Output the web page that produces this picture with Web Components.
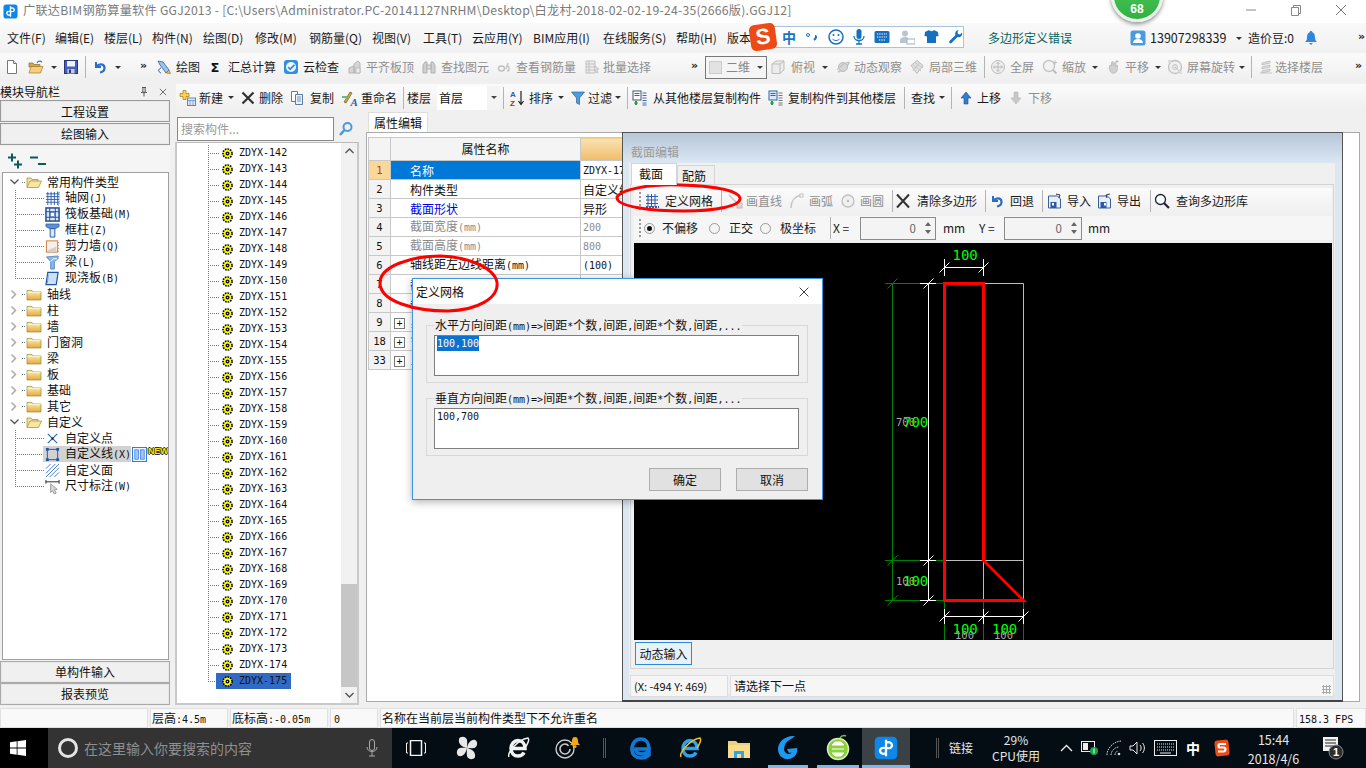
<!DOCTYPE html>
<html lang="zh-CN">
<head>
<meta charset="utf-8">
<title>GGJ2013</title>
<style>
  html, body { margin: 0; height: 100%; overflow: hidden; background: #f0f0f0; }
  body { font: 12px/16px "Noto Sans CJK SC", "Liberation Sans", sans-serif; color: #111; }
  gld-app { width: 1366px; height: 768px; }
</style>
</head>
<body>

<gld-app>
  <title-bar></title-bar>

  <tool-bar slot="menu" kind="menu">
    <tool-cell w="48">文件(F)</tool-cell>
    <tool-cell w="49">编辑(E)</tool-cell>
    <tool-cell w="48">楼层(L)</tool-cell>
    <tool-cell w="51">构件(N)</tool-cell>
    <tool-cell w="52">绘图(D)</tool-cell>
    <tool-cell w="54">修改(M)</tool-cell>
    <tool-cell w="63">钢筋量(Q)</tool-cell>
    <tool-cell w="51">视图(V)</tool-cell>
    <tool-cell w="49">工具(T)</tool-cell>
    <tool-cell w="61">云应用(Y)</tool-cell>
    <tool-cell w="70">BIM应用(I)</tool-cell>
    <tool-cell w="73">在线服务(S)</tool-cell>
    <tool-cell w="51">帮助(H)</tool-cell>
    <tool-cell w="23">版本</tool-cell>
    <ime-bar></ime-bar>
    <tool-cell w="34"></tool-cell>
    <tool-cell w="142"><span style="color:#006464">多边形定义错误</span></tool-cell>
    <tool-cell w="20" icon="user" g="0"></tool-cell>
    <tool-cell w="86"><span style="font-size:12.5px">13907298339</span></tool-cell>
    <tool-caret w="12" p="0"></tool-caret>
    <tool-cell w="55">造价豆:0</tool-cell>
    <tool-cell w="55" icon="bell"></tool-cell>
    <tool-cell w="8" icon="more"></tool-cell>
  </tool-bar>

  <tool-bar slot="bar">
    <tool-cell w="22" icon="doc"></tool-cell>
    <tool-cell w="22" p="2" icon="open"></tool-cell>
    <tool-caret w="12" p="3"></tool-caret>
    <tool-cell w="25" p="3" icon="save"></tool-cell>
    <tool-sep w="1" p="0"></tool-sep>
    <tool-cell w="24" p="6" icon="undo"></tool-cell>
    <tool-caret w="14" p="5"></tool-caret>
    <tool-cell w="29" p="16" icon="more"></tool-cell>
    <tool-cell w="54" p="3" g="4" icon="draw">绘图</tool-cell>
    <tool-cell w="76" g="5" icon="sigma">汇总计算</tool-cell>
    <tool-cell w="64" g="4" icon="cloud">云检查</tool-cell>
    <tool-cell w="74" g="3" icon="level" dim>平齐板顶</tool-cell>
    <tool-cell w="76" g="4" icon="binoc" dim>查找图元</tool-cell>
    <tool-cell w="87" g="3" icon="rebar" dim>查看钢筋量</tool-cell>
    <tool-cell w="105" g="3" icon="batch" dim>批量选择</tool-cell>
    <tool-cell w="16" p="2" icon="more"></tool-cell>
    <combo-box w="62" swatch>二维</combo-box>
    <tool-cell w="54" p="3" g="5" icon="cube" dim>俯视</tool-cell>
    <tool-caret w="14" p="1"></tool-caret>
    <tool-cell w="74" g="3" icon="orbit" dim>动态观察</tool-cell>
    <tool-cell w="75" g="4" icon="local3d" dim>局部三维</tool-cell>
    <tool-sep w="1" p="0"></tool-sep>
    <tool-cell w="55" p="5" g="4" icon="fit" dim>全屏</tool-cell>
    <tool-cell w="50" p="2" g="4" icon="zoom" dim>缩放</tool-cell>
    <tool-caret w="15" p="2"></tool-caret>
    <tool-cell w="48" g="4" icon="pan" dim>平移</tool-cell>
    <tool-caret w="14" p="2"></tool-caret>
    <tool-cell w="72" g="4" icon="rotate" dim>屏幕旋转</tool-cell>
    <tool-caret w="12" p="0"></tool-caret>
    <tool-sep w="1" p="0"></tool-sep>
    <tool-cell w="100" p="6" g="1" icon="floors" dim>选择楼层</tool-cell>
    <tool-cell w="10" p="3" icon="more"></tool-cell>
  </tool-bar>

  <nav-panel slot="nav"></nav-panel>

  <tool-bar slot="bar2" kind="sub">
    <tool-cell w="51" p="4" g="3" icon="add">新建</tool-cell>
    <tool-caret w="11" p="1"></tool-caret>
    <tool-cell w="48" p="2" g="3" icon="del">删除</tool-cell>
    <tool-cell w="54" p="3" g="5" icon="copy">复制</tool-cell>
    <tool-cell w="62" p="1" g="4" icon="rename">重命名</tool-cell>
    <tool-sep w="3" p="1"></tool-sep>
    <tool-cell w="32" p="2">楼层</tool-cell>
    <combo-box w="63" flat>首层</combo-box>
    <tool-sep w="5" p="3"></tool-sep>
    <tool-cell w="53" p="5" g="3" icon="sort">排序</tool-cell>
    <tool-caret w="12" p="0"></tool-caret>
    <tool-cell w="45" g="2" icon="filter">过滤</tool-cell>
    <tool-caret w="11" p="0"></tool-caret>
    <tool-sep w="3" p="1"></tool-sep>
    <tool-cell w="137" p="3" g="5" icon="copyfrom">从其他楼层复制构件</tool-cell>
    <tool-cell w="134" p="2" g="4" icon="copyto">复制构件到其他楼层</tool-cell>
    <tool-sep w="8" p="4"></tool-sep>
    <tool-cell w="31" p="3">查找</tool-cell>
    <tool-caret w="10" p="0"></tool-caret>
    <tool-sep w="6" p="2"></tool-sep>
    <tool-cell w="48" p="3" g="3" icon="up">上移</tool-cell>
    <tool-cell w="60" p="5" g="4" icon="down" dim>下移</tool-cell>
  </tool-bar>

  <parts-panel slot="parts"></parts-panel>
  <props-panel slot="props"></props-panel>

  <status-bar slot="status"></status-bar>
  <task-bar slot="task"></task-bar>

  <section-window slot="float"></section-window>
  <grid-dialog slot="float"></grid-dialog>
  <hand-marks slot="float"></hand-marks>
</gld-app>

<script>
// shared icon set, all drawn on a 16x16 box
const folderClosed = `<path d="M1 4.5h5l1.2 1.5H15v8H1z" fill="url(#fg)" stroke="#a8842c" stroke-width=".7"/><path d="M1.5 6.5h13" stroke="#fff3c4"/>`;
const ICONS = {
  gradients: `<defs><linearGradient id="fg" x1="0" y1="0" x2="0" y2="1"><stop offset="0" stop-color="#fff2b8"/><stop offset="1" stop-color="#e0a93c"/></linearGradient></defs>`,
  app: `<rect x=".5" y=".5" width="15" height="15" rx="3" fill="#0d87e9"/><path d="M8 2.5v11M8 4.6c2.4-1.2 4.6.4 3.8 2.5-.4 1-1.8 1.2-3.8 1M8 11.4C5.6 12.6 3.4 11 4.2 8.9c.4-1 1.8-1.2 3.8-.8" fill="none" stroke="#fff" stroke-width="1.5"/>`,
  doc: `<path d="M3.5 1.5h6l3 3v10h-9z" fill="#fff" stroke="#777"/><path d="M9.5 1.5v3h3" fill="#e8e8e8" stroke="#777"/>`,
  open: `<path d="M1 4h4l1 1.5h6V8H1z" fill="#d9a544" stroke="#8c6a28" stroke-width=".7"/><path d="M1 14l2-6.5h12L12.5 14z" fill="#f5cf78" stroke="#a07a30" stroke-width=".7"/><path d="M9 4c1-2 3-2.500 5-1" fill="none" stroke="#3a7ac0" stroke-width="1.200"/>`,
  save: `<rect x="1.500" y="1.500" width="13" height="13" fill="#4660b8" stroke="#26357c"/><rect x="4" y="2" width="8" height="5.500" fill="#eef2fb"/><rect x="4.500" y="10" width="7" height="4.500" fill="#c6cde0"/><rect x="6" y="10.500" width="2" height="3.500" fill="#26357c"/>`,
  undo: `<path d="M4 3v5h5" fill="none" stroke="#2b6cc4" stroke-width="2"/><path d="M4.500 7.500C7 4.500 12.500 4.500 12.500 9c0 2.500-2 4-4.500 4.500" fill="none" stroke="#2b6cc4" stroke-width="2.200"/>`,
  draw: `<path d="M2 2l5 1 6 8-3 3-6-8z" fill="#9cc3ea" stroke="#345f96" stroke-width=".8"/><path d="M10 14l3-3 1.500 3.500z" fill="#e9c45a" stroke="#7a5f20" stroke-width=".6"/><path d="M5 9c-3 1-3 4 0 5" fill="none" stroke="#345f96"/>`,
  sigma: `<text x="8" y="13" text-anchor="middle" font-family="DejaVu Sans" font-weight="700" font-size="13" fill="#111">Σ</text>`,
  cloud: `<rect x="1" y="1" width="14" height="14" rx="3" fill="#2f8fe0"/><circle cx="8" cy="8" r="5" fill="#f2f7fc"/><path d="M5 8l2.200 2.200L11.500 5.800" fill="none" stroke="#2f8fe0" stroke-width="1.700"/>`,
  level: `<path d="M2 14V9l5-2v7zM7 14V5l4-3 2 2v10z" fill="#d6d6d6" stroke="#b4b4b4"/><path d="M9 9h4v5H9z" fill="#eee" stroke="#bbb"/>`,
  binoc: `<path d="M2 14V6l2-3h2v11zM10 14V3h2l2 3v8z" fill="#cfcfcf" stroke="#b0b0b0"/><rect x="6" y="6" width="4" height="4" fill="#ddd" stroke="#b0b0b0"/>`,
  rebar: `<ellipse cx="4.500" cy="9.500" rx="3" ry="2.500" fill="none" stroke="#c2c2c2" stroke-width="1.400"/><path d="M10 7c3 0 3 5 0 5M11 4l-2 6" fill="none" stroke="#c2c2c2" stroke-width="1.400"/>`,
  batch: `<path d="M2 2h9v12H2zM2 5h9M2 8h9M2 11h9M5 2v12" fill="#eee" stroke="#c0c0c0"/><path d="M11 7l4 3-2 .5 1 3-1.500.5-1-3-1 1z" fill="#ddd" stroke="#b8b8b8" stroke-width=".6"/>`,
  more: `<text x="0" y="10" font-family="DejaVu Sans" font-weight="700" font-size="11" fill="#222">»</text>`,
  cube: `<path d="M2 5l4-3h8v9l-4 3.500H2z" fill="#ececec" stroke="#bdbdbd"/><path d="M2 5h8v9.500M10 5l4-3" fill="none" stroke="#bdbdbd"/>`,
  orbit: `<path d="M3 13C6 12 14 6 14 3" fill="none" stroke="#c8c8c8" stroke-width="2"/><circle cx="8" cy="8" r="4.500" fill="#d6d6d6" stroke="#bbb"/><path d="M2 11c3-4 7-7 12-8" fill="none" stroke="#bdbdbd"/>`,
  local3d: `<path d="M8 1.500l6 5-6 8-6-8z" fill="#e2e2e2" stroke="#bdbdbd"/><path d="M3 5l9 7M5 3l9 6M11 3l-7 9" stroke="#c6c6c6" fill="none"/>`,
  fit: `<circle cx="8" cy="8" r="6.500" fill="#eee" stroke="#bcbcbc"/><path d="M8 3.500v9M3.500 8h9M8 3.500l-1.500 1.500M8 3.500l1.500 1.500M8 12.500l-1.500-1.500M8 12.500l1.500-1.500M3.500 8L5 6.500M3.500 8L5 9.500M12.500 8L11 6.500M12.500 8L11 9.500" stroke="#b8b8b8" fill="none"/>`,
  zoom: `<circle cx="7" cy="7" r="5.500" fill="#f2f2f2" stroke="#c4c4c4" stroke-width="1.400"/><path d="M11 11l3.500 3.500" stroke="#bdbdbd" stroke-width="2"/><path d="M13 1.500v4M11 3.500h4" stroke="#bdbdbd"/>`,
  pan: `<path d="M4 9l1-3 1.500 1V3l1.500-.5.500 4 1-3 1.500.5-.5 4 1-2 1.200.8L12 12c-1 2.500-5 3-6.500 1z" fill="#d0d0d0" stroke="#b4b4b4" stroke-width=".7"/><path d="M12 1v3M10.500 2.500h3" stroke="#bbb"/>`,
  rotate: `<circle cx="8" cy="8" r="6.500" fill="#f0f0f0" stroke="#c0c0c0" stroke-width="1.300"/><circle cx="8" cy="8" r="2.500" fill="#e4e4e4" stroke="#c8c8c8"/><path d="M8 8l4 4" stroke="#c0c0c0"/><rect x="1" y="1" width="3" height="3" fill="#ddd"/><rect x="12" y="12" width="3" height="3" fill="#ddd"/>`,
  floors: `<path d="M4 4l8-2v2l-8 2zM4 8l8-2v2l-8 2zM4 12l8-2v2l-8 2zM2 14h12" fill="#ddd" stroke="#bdbdbd" stroke-width=".8"/>`,
  add: `<path d="M3 0.500h3v3h3v3H6v3H3v-3H0v-3h3z" fill="#ffd34d" stroke="#9c7c10" stroke-width=".7"/><rect x="7.500" y="8" width="8" height="7.500" fill="#dfe9f6" stroke="#5f86b8"/><path d="M7.500 10.500h8M10 10.500v5M13 10.500v5" stroke="#5f86b8" stroke-width=".7"/>`,
  del: `<path d="M2.500 2.500l11 11M13.500 2.500l-11 11" stroke="#333" stroke-width="2.200"/>`,
  copy: `<path d="M2.500 1.500h6v10h-6z" fill="#fff" stroke="#5a7ca8"/><path d="M6.500 4.500h7v10h-7z" fill="#eaf1fa" stroke="#5a7ca8"/><path d="M8 7h4M8 9h4M8 11h4" stroke="#5a7ca8" stroke-width=".8"/>`,
  rename: `<path d="M3 12l6-10 2 1-6 10z" fill="#c9a94a" stroke="#6e5a1c" stroke-width=".7"/><path d="M1 7h5" stroke="#6b8" stroke-width="2"/><text x="9.500" y="15.500" font-family="Liberation Serif" font-weight="700" font-style="italic" font-size="11" fill="#2b5fa8">A</text>`,
  sort: `<text x="0" y="7" font-family="Liberation Sans" font-weight="700" font-size="8" fill="#2b5fa8">A</text><text x="0" y="15.500" font-family="Liberation Sans" font-weight="700" font-size="8" fill="#a82b2b">Z</text><path d="M11 1v13M8.500 11l2.500 3.500 2.500-3.500" stroke="#222" fill="none" stroke-width="1.200"/>`,
  filter: `<path d="M1.500 2h13L9.500 8v6.500l-3-1.500V8z" fill="#4e9be0" stroke="#2b66a6" stroke-width=".7"/>`,
  copyfrom: `<rect x="1" y="1" width="8" height="9" fill="#fff" stroke="#456"/><path d="M2.500 3.500h5M2.500 5.500h5" stroke="#2b66a6"/><path d="M4 11v4M2.500 13h3" stroke="#2a9d3a" stroke-width="2"/><path d="M10.500 3h4M10.500 5.500h4M10.500 8h4M10.500 10.500h4M10.500 13h4M10.500 15h4" stroke="#3b6ea8"/>`,
  copyto: `<rect x="1" y="1" width="8" height="9" fill="#dbe8fb" stroke="#2b66a6"/><path d="M2.500 3.500h5M2.500 5.500h5" stroke="#2b66a6"/><path d="M4 11v4M2.500 13h3" stroke="#2a9d3a" stroke-width="2"/><path d="M10.500 3h4M10.500 5.500h4M10.500 8h4M10.500 10.500h4M10.500 13h4M10.500 15h4" stroke="#777"/>`,
  up: `<path d="M8 2l5 6H10v6H6V8H3z" fill="#2e7fd0" stroke="#1a4f92" stroke-width=".6"/>`,
  down: `<path d="M6 2h4v6h3l-5 6-5-6h3z" fill="#c8c8c8" stroke="#b4b4b4" stroke-width=".6"/>`,
  user: `<rect x=".5" y=".5" width="15" height="15" rx="2.500" fill="#4a9adf"/><circle cx="8" cy="6" r="2.800" fill="#fff"/><path d="M3 13c.5-3 2-4 5-4s4.500 1 5 4z" fill="#fff"/>`,
  bell: `<path d="M8 1c1 0 1.300.7 1.300 1.300C11.500 3 12 5 12 8c0 2 1 3 2 4H2c1-1 2-2 2-4 0-3 .5-5 2.700-5.700C6.700 1.700 7 1 8 1z" fill="#2e86de"/><path d="M6 13h4l-2 2z" fill="#2e86de"/>`,
  gear: `<circle cx="8" cy="8" r="5.600" fill="#ff0" stroke="#000" stroke-width="2" stroke-dasharray="2 1.200"/><circle cx="8" cy="8" r="3.400" fill="#ff0"/><circle cx="8" cy="8" r="2.400" fill="#000"/><circle cx="8" cy="8" r=".9" fill="#ff0"/>`,
  folder: folderClosed,
  folderopen: `<path d="M1 13V4h4l1 1.500h6V7" fill="#f2e2a8" stroke="#a8842c" stroke-width=".7"/><path d="M1 13.500L4 7h11.500l-3 6.500z" fill="#fbe6a0" stroke="#a8842c" stroke-width=".7"/>`,
  gridnet: `<path d="M1 3h14M1 6h14M1 9h14M1 12h14M3 1v14M6.500 1v14M10 1v14M13.500 1v14" stroke="#2b5fb0" fill="none"/><path d="M13 1h2v14h-2" fill="none" stroke="#2b5fb0" stroke-dasharray="1 1"/>`,
  raft: `<rect x="1" y="1" width="14" height="14" fill="#dbe6f6" stroke="#1f4f9c" stroke-width="1.600"/><path d="M1 5h14M1 11h14M5 1v14M11 1v14" stroke="#1f4f9c"/><rect x="6" y="6" width="4" height="4" fill="#fff" stroke="#1f4f9c" stroke-width=".6"/>`,
  column: `<path d="M1 1h14v3l-4 2H5L1 4z" fill="#5d8fd6" stroke="#23559c" stroke-width=".7"/><path d="M5.500 6h5v9h-5z" fill="#dbe8fa" stroke="#23559c"/>`,
  wall: `<rect x="1.500" y="2" width="12" height="12" fill="#f7f0ea" stroke="#cc7a3c"/><path d="M3 12l9-4v5H3z" fill="#c8c8c8" opacity=".8"/><path d="M14 4h2M14 7h2M14 10h2M14 13h2" stroke="#cc7a3c" stroke-dasharray="1 1"/>`,
  beam: `<path d="M1.500 2L14 1v3L10 7v8H6V7z" fill="#8ab6e8" stroke="#3f78bf" stroke-width=".8"/><path d="M6 7l3-3h4" fill="none" stroke="#fff"/>`,
  slab: `<path d="M3 1.500h11l-2 13H1z" fill="#cfe0f6" stroke="#1f55a6" stroke-width="1.300"/><path d="M2.500 13l1-9" stroke="#6c9ad8"/>`,
  point: `<path d="M3 3l10 10M13 3L3 13" stroke="#2b6cb8" stroke-width="1.300"/><rect x="7" y="7" width="2" height="2" fill="#111"/>`,
  polyline: `<rect x="2.500" y="2.500" width="11" height="11" fill="none" stroke="#2255a8"/><rect x="1" y="1" width="3" height="3" fill="#2255a8"/><rect x="12" y="1" width="3" height="3" fill="#2255a8"/><rect x="1" y="12" width="3" height="3" fill="#2255a8"/><rect x="12" y="12" width="3" height="3" fill="#2255a8"/>`,
  hatch: `<path d="M1 6l5-5M1 11L11 1M1 15L15 1M5 15L15 5M10 15l5-5" stroke="#3c78d0"/>`,
  dimcur: `<path d="M1 1v4M1 3h14M15 1v4" stroke="#222"/><path d="M6 5l7 6-3 .5 2 3.500-2 1-2-3.500-2 2z" fill="#d6d6d6" stroke="#888" stroke-width=".8"/>`,
  newcol: `<rect x=".5" y=".5" width="15" height="15" fill="#eaf3ff" stroke="#2c74d6"/><rect x="3" y="3" width="4" height="10" fill="#9fc5f5" stroke="#2c74d6" stroke-width=".7"/><rect x="9" y="3" width="4" height="10" fill="#9fc5f5" stroke="#2c74d6" stroke-width=".7"/>`,
  search: `<circle cx="9.500" cy="6" r="4" fill="none" stroke="#4a98dc" stroke-width="2"/><path d="M6.500 9L2 14" stroke="#4a98dc" stroke-width="2.600"/>`,
  plusplus: `<path d="M1 4.500h8M5 .5v8M7 11.500h8M11 7.500v8" stroke="#0a5c5c" stroke-width="2"/>`,
  minusminus: `<path d="M0 4.500h8M8 11h8" stroke="#0a5c5c" stroke-width="2"/>`,
  pin: `<path d="M5.500 2h5M6.500 2v6M9.500 2v6M4 8.500h8M8 8.500V14" stroke="#222" fill="none"/>`,
  close: `<path d="M3 3l10 10M13 3L3 13" stroke="#222" fill="none"/>`,
  gridtool: `<path d="M1 3.500h12M1 7h12M1 10.500h12M3 1v13M6.500 1v13M10 1v13" stroke="#2c5fb0" fill="none"/><path d="M1 14h13" stroke="#2c5fb0" stroke-width="2" stroke-dasharray="2 1"/>`,
  line: `<path d="M2 2l11 11" stroke="#c4c4c4" stroke-width="1.400"/><rect x="10" y="10" width="5" height="5" fill="#d8d8d8" stroke="#bbb"/>`,
  arc: `<path d="M2 15C2 8 6 3 13 2" fill="none" stroke="#c4c4c4" stroke-width="1.400"/><rect x="11" y="1" width="3" height="3" fill="#fff" stroke="#c0c0c0"/>`,
  circle: `<circle cx="8" cy="8" r="6" fill="#f0f0f0" stroke="#c0c0c0" stroke-width="1.300"/><circle cx="8" cy="8" r="1.200" fill="#bbb"/>`,
  xbig: `<path d="M2 1.500l12 13M14 1.500l-12 13" stroke="#333" stroke-width="2"/>`,
  imp: `<path d="M1.500 3h9l3 3v9h-12z" fill="#e8eff8" stroke="#3a5f94"/><rect x="3.500" y="9" width="6" height="6" fill="#2d57a8"/><rect x="5" y="10" width="2" height="2.500" fill="#fff"/><path d="M9 1l4 1-1 3" fill="none" stroke="#333"/>`,
  exp: `<path d="M1.500 3h9l3 3v9h-12z" fill="#e8eff8" stroke="#3a5f94"/><rect x="3.500" y="9" width="6" height="6" fill="#2d57a8"/><rect x="7" y="10" width="2" height="2.500" fill="#fff"/><path d="M13 1l-4 1 1 3" fill="none" stroke="#333"/>`,
  lens: `<circle cx="6.500" cy="6.500" r="5" fill="#f6fbff" stroke="#223" stroke-width="1.300"/><path d="M10 10l5 5" stroke="#223" stroke-width="2.200"/>`
};

function svgIcon(name, size = 16) {
  return `<svg width="${size}" height="${size}" viewBox="0 0 16 16" style="display:block;flex:none;overflow:visible">${name === 'folder' ? ICONS.gradients : ''}${ICONS[name] || ''}</svg>`;
}

// SimSun-ish text: 12px ideographs with 6px wide latin
function monoHtml(str) {
  return str.replace(/[\x20-\x7e]+/g, m => `<span style="font:10px/16px 'DejaVu Sans Mono',monospace;white-space:pre">${m}</span>`);
}

class UiElement extends HTMLElement {
  constructor() {
    super();
    this.attachShadow({ mode: 'open' });
  }

  connectedCallback() {
    this.shadowRoot.innerHTML = `<style>:host,*{box-sizing:border-box} ${this.styles()}</style>${this.markup()}`;
  }

  styles() { return ''; }
  markup() { return '<slot></slot>'; }
}

class GldApp extends UiElement {
  styles() {
    return `
      :host { display: block; position: relative; overflow: hidden; }
      .bar1 { height: 28px; margin-bottom: 3px; }
      .work { display: grid; grid-template-columns: 172px 194px 1fr; height: 621px; }
      .mid { display: flex; flex-direction: column; min-width: 0; }
      .rest { display: flex; flex-direction: column; min-width: 0; }
      .sub { height: 27px; margin-left: -194px; width: calc(100% + 194px); }
      .gap { height: 3px; }
    `;
  }

  markup() {
    return `
      <slot></slot>
      <slot name="menu"></slot>
      <div class="bar1"><slot name="bar"></slot></div>
      <div class="work">
        <slot name="nav"></slot>
        <div class="mid"><div style="height:27px"></div><slot name="parts"></slot></div>
        <div class="rest"><div class="sub"><slot name="bar2"></slot></div><slot name="props"></slot></div>
      </div>
      <div class="gap"></div>
      <slot name="status"></slot>
      <slot name="task"></slot>
      <slot name="float"></slot>
    `;
  }
}

class TitleBar extends UiElement {
  styles() {
    return `
      :host { display: flex; height: 23px; background: #fff; align-items: center; position: relative; }
      .ic { margin: 0 5px 0 3px; }
      .t { color: #7a7a7a; white-space: nowrap; flex: 1; font-size: 12.2px; letter-spacing: .23px; margin-top: -4px; }
      .win { display: flex; align-items: center; margin-right: 19px; margin-top: -4px; }
      .win svg { display: block; margin-left: 33px; }
      .badge { position: absolute; left: 1111px; top: -30px; width: 52px; height: 52px; border-radius: 50%;
        background: linear-gradient(#54cc5c, #31b044); border: 3px solid #e9f3ea; box-shadow: 0 2px 4px rgba(0,0,0,.45);
        color: #fff; font: 700 12px/14px "Liberation Sans", sans-serif; text-align: center; padding-top: 29px; z-index: 3; }
    `;
  }

  markup() {
    return `
      <div class="ic">${svgIcon('app', 15)}</div>
      <div class="t">广联达BIM钢筋算量软件 GGJ2013 - [C:\\Users\\Administrator.PC-20141127NRHM\\Desktop\\白龙村-2018-02-02-19-24-35(2666版).GGJ12]</div>
      <div class="win">
        <svg width="12" height="12" viewBox="0 0 12 12"><path d="M1 6h10" stroke="#888"/></svg>
        <svg width="12" height="12" viewBox="0 0 12 12"><path d="M1.500 3.500h7v8h-7zM3.500 3.500v-2h7v8h-2" fill="none" stroke="#888"/></svg>
        <svg width="12" height="12" viewBox="0 0 12 12"><path d="M1 1l10 10M11 1L1 11" stroke="#777"/></svg>
      </div>
      <div class="badge">68</div>
    `;
  }
}

class ToolBar extends UiElement {
  styles() {
    return `
      :host { display: flex; align-items: center; height: 100%; padding-left: 4px; white-space: nowrap;
        background: linear-gradient(#fbfbfb, #efefef); }
      :host([kind=menu]) { height: 30px; padding-left: 7px; background: linear-gradient(#f9f9f9, #f1f1f1); }
      :host([kind=sub]) { height: 27px; padding-left: 4px; background-clip: content-box; }
    `;
  }
}

class ToolCell extends UiElement {
  styles() {
    const w = this.getAttribute('w'), p = this.getAttribute('p') || 0, g = this.getAttribute('g') || 0;
    return `
      :host { display: flex; flex: none; width: ${w}px; padding-left: ${p}px; gap: ${g}px; align-items: center; height: 20px;
        color: ${this.hasAttribute('dim') ? '#8f8f8f' : '#1a1a1a'}; white-space: nowrap; }
    `;
  }

  markup() {
    const icon = this.getAttribute('icon');
    return `${icon ? svgIcon(icon) : ''}<span><slot></slot></span>`;
  }
}

class ToolSep extends UiElement {
  styles() {
    return `
      :host { display: block; flex: none; width: ${this.getAttribute('w')}px; height: 22px; padding-left: ${this.getAttribute('p') || 0}px; }
      div { width: 1px; height: 100%; background: #b4b4b4; }
    `;
  }

  markup() { return '<div></div>'; }
}

class ToolCaret extends UiElement {
  styles() {
    return `
      :host { display: flex; flex: none; align-items: center; width: ${this.getAttribute('w')}px; height: 20px; padding-left: ${this.getAttribute('p') || 0}px; }
      i { display: block; border: 3px solid transparent; border-top: 3px solid #333; border-bottom: 0; }
    `;
  }

  markup() { return '<i></i>'; }
}

class ComboBox extends UiElement {
  styles() {
    const flat = this.hasAttribute('flat');
    return `
      :host { display: flex; flex: none; align-items: center; width: ${this.getAttribute('w')}px; height: ${flat ? 24 : 23}px;
        border: ${flat ? '0' : '1px solid #777'}; background: ${flat ? '#fff' : '#f5f5f5'};
        color: ${flat ? '#111' : '#888'}; padding-left: ${flat ? 2 : 3}px; }
      .sw { width: 13px; height: 13px; background: #e2e2e2; border: 1px solid #ccc; margin-right: 4px; }
      .t { flex: 1; }
      .a { width: 13px; height: 100%; display: flex; align-items: center; justify-content: center; background: ${flat ? '#f4f4f4' : 'transparent'}; }
      i { border: 3px solid transparent; border-top: 3px solid #444; border-bottom: 0; }
    `;
  }

  markup() {
    return `${this.hasAttribute('swatch') ? '<div class="sw"></div>' : ''}<div class="t"><slot></slot></div><div class="a"><i></i></div>`;
  }
}

class ImeBar extends UiElement {
  styles() {
    return `
      :host { display: flex; flex: none; width: 204px; height: 22px; margin-top: -3px; align-items: center; }
      .s { width: 26px; height: 26px; flex: none; border-radius: 5px; background: #ee4a16; transform: rotate(-8deg); margin-top: 0;
        color: #fff; font: 700 22px/25px "Liberation Sans", sans-serif; text-align: center; z-index: 1; }
      .b { flex: 1; display: flex; align-items: center; height: 22px; background: #fff; border: 1px solid #aac4dc; margin-left: -3px; padding-left: 8px; gap: 9px; color: #1976c4; }
      .zh { font-weight: 700; font-size: 14px; }
    `;
  }

  markup() {
    const blue = '#1670c0';
    return `
      <div class="s">S</div>
      <div class="b">
        <span class="zh">中</span>
        <svg width="14" height="16" viewBox="0 0 14 16"><circle cx="3" cy="6" r="1.500" fill="none" stroke="${blue}"/><path d="M10 7c1.500 0 1.500 2-1 4" fill="none" stroke="${blue}" stroke-width="2"/></svg>
        <svg width="16" height="16" viewBox="0 0 16 16"><circle cx="8" cy="8" r="7" fill="#fff" stroke="${blue}" stroke-width="1.500"/><circle cx="5.500" cy="6" r="1" fill="${blue}"/><circle cx="10.500" cy="6" r="1" fill="${blue}"/><path d="M4.500 10c2 2 5 2 7 0" fill="none" stroke="${blue}"/></svg>
        <svg width="12" height="16" viewBox="0 0 12 16"><rect x="3.500" y="0" width="5" height="10" rx="2.500" fill="${blue}"/><path d="M1 7c0 6 10 6 10 0M6 12v3M3 15h6" fill="none" stroke="${blue}" stroke-width="1.300"/></svg>
        <svg width="16" height="14" viewBox="0 0 16 14"><rect x=".5" y="1" width="15" height="12" rx="1.500" fill="${blue}"/><path d="M3 4h10M3 7h10M5 10h6" stroke="#fff" stroke-dasharray="1.300 1" fill="none"/></svg>
        <svg width="16" height="16" viewBox="0 0 16 16"><circle cx="6" cy="4.500" r="3" fill="#b9c6d2"/><path d="M1 12c0-3 2-4 5-4s3 1 3 1v5H1z" fill="#b9c6d2"/><rect x="8" y="10" width="8" height="5" fill="#fff" stroke="#9fb0c0"/></svg>
        <svg width="15" height="15" viewBox="0 0 15 15"><path d="M5 1L1 3 .5 7l2.500.5V14h9V7.500l2.500-.5L14 3l-4-2c-.5 1.500-4.500 1.500-5 0z" fill="${blue}"/></svg>
        <svg width="15" height="15" viewBox="0 0 15 15"><path d="M10.500 1a3.500 3.500 0 0 0-3 5L1.500 12c-1 1.500.5 3 2 2l6-6a3.500 3.500 0 0 0 4.500-4.500L12 5.500 10 5 9.500 3z" fill="${blue}"/></svg>
      </div>
    `;
  }
}

class UiButton extends UiElement {
  styles() {
    return `
      :host { display: flex; align-items: center; justify-content: center; border: 1px solid #9a9a9a; background: #f0f0f0; color: #111;
        box-shadow: inset 0 0 0 1px #e8e8e8; }
    `;
  }
}

class NavPanel extends UiElement {
  styles() {
    return `
      :host { display: flex; flex-direction: column; width: 170px; height: 621px; }
      .hd { height: 16px; display: flex; align-items: center; padding-right: 2px; }
      .hd span { flex: 1; }
      ui-button { height: 22px; margin-bottom: 1px; }
      .tools { height: 26px; display: flex; align-items: center; padding: 3px 0 0 7px; gap: 7px; background: #f5f5f5; }
      tree-view { flex: 1; margin: 0 1px 1px 2px; }
      ui-button.b { border-color: #aaa; }
    `;
  }

  markup() {
    return `
      <div class="hd"><span>模块导航栏</span>${svgIcon('pin', 12)}<span style="flex:0 0 8px"></span>${svgIcon('close', 10)}</div>
      <ui-button style="padding-top:2px">工程设置</ui-button>
      <ui-button>绘图输入</ui-button>
      <div class="tools">${svgIcon('plusplus')}${svgIcon('minusminus')}</div>
      <tree-view></tree-view>
      <ui-button class="b" style="margin-bottom:0">单构件输入</ui-button>
      <ui-button class="b" style="margin-bottom:0">报表预览</ui-button>
    `;
  }
}

// dotted tree connector: vertical half for the last child, full for the others
const connCss = `
  .conn { flex: none; height: 16px;
    background:
      repeating-linear-gradient(to bottom, #777 0 1px, transparent 1px 2px) left top / 1px 100% no-repeat,
      repeating-linear-gradient(to right, #777 0 1px, transparent 1px 2px) left 8px / 100% 1px no-repeat; }
  .conn.last { background:
      repeating-linear-gradient(to bottom, #777 0 1px, transparent 1px 2px) left top / 1px 9px no-repeat,
      repeating-linear-gradient(to right, #777 0 1px, transparent 1px 2px) left 8px / 100% 1px no-repeat; }
`;

class TreeView extends UiElement {
  styles() {
    return `
      :host { display: block; background: #fff; border: 1px solid #a0a0a0; padding-top: 1px; overflow: hidden; }
      .row { display: flex; align-items: center; height: 16px; white-space: nowrap; }
      .root { padding-left: 3px; }
      .chev { flex: none; width: 16px; display: flex; justify-content: center; }
      .tick { flex: none; width: 4px; height: 1px; background: repeating-linear-gradient(to right, #777 0 1px, transparent 1px 2px); }
      .root .lb { margin-left: 5px; }
      .kid { padding-left: 12px; }
      .kid .conn { width: 30px; }
      .kid .lb { margin-left: 5px; }
      .sel { background: #d2d2d2; height: 16px; display: flex; align-items: center; width: 89px; margin-left: -2px; padding-left: 2px; }
      .new { font: 700 9px/10px "Liberation Sans", sans-serif; color: #ffe000; margin: -6px 0 0 1px; letter-spacing: -.3px;
        text-shadow: 1px 0 #333, -1px 0 #333, 0 1px #333, 0 -1px #333; }
      .fill { margin-left: 1px; }
      ${connCss}
    `;
  }

  markup() {
    const chev = open => open
      ? `<svg width="9" height="6" viewBox="0 0 9 6"><path d="M.5 .5l4 4 4-4" fill="none" stroke="#555" stroke-width="1.300"/></svg>`
      : `<svg width="6" height="9" viewBox="0 0 6 9"><path d="M.5 .5l4 4-4 4" fill="none" stroke="#aaa" stroke-width="1.500"/></svg>`;
    const root = (label, open) => `<div class="row root"><div class="chev">${chev(open)}</div><div class="tick"></div>${svgIcon(open ? 'folderopen' : 'folder')}<span class="lb">${label}</span></div>`;
    const kid = (label, icon, last) => `<div class="row kid"><div class="conn ${last ? 'last' : ''}"></div>${svgIcon(icon, 15)}<span class="lb">${monoHtml(label)}</span></div>`;
    const picked = `<div class="row kid"><div class="conn"></div><div class="sel">${svgIcon('polyline', 15)}<span class="lb">${monoHtml('自定义线(X)')}</span></div><span class="fill">${svgIcon('newcol', 15)}</span><span class="new">NEW</span></div>`;
    return [
      root('常用构件类型', true),
      kid('轴网(J)', 'gridnet'), kid('筏板基础(M)', 'raft'), kid('框柱(Z)', 'column'), kid('剪力墙(Q)', 'wall'), kid('梁(L)', 'beam'), kid('现浇板(B)', 'slab', true),
      root('轴线'), root('柱'), root('墙'), root('门窗洞'), root('梁'), root('板'), root('基础'), root('其它'),
      root('自定义', true),
      kid('自定义点', 'point'), picked, kid('自定义面', 'hatch'), kid('尺寸标注(W)', 'dimcur', true)
    ].join('');
  }
}

class PartsPanel extends UiElement {
  styles() {
    return `
      :host { display: flex; flex-direction: column; flex: 1; padding-left: 3px; padding-right: 7px; }
      .search { display: flex; height: 31px; padding: 6px 0 1px 2px; gap: 4px; }
      .input { width: 157px; height: 24px; background: #fff; border: 1px solid #888; color: #999; padding: 3px 3px; line-height: 16px; }
      .go { padding-top: 4px; }
      .list { flex: 1; display: flex; border: 2px solid #c9c9c9; border-top: 1px solid #bbb; background: #fff; overflow: hidden; }
      .rows { flex: 1; padding-top: 2px; padding-left: 31px; }
      .row { display: flex; height: 16px; align-items: center; font: 10px/16px "DejaVu Sans Mono", monospace; }
      .conn { width: 12px; }
      .lb { display: flex; align-items: center; gap: 5px; width: 75px; height: 16px; margin-left: -4px; padding-left: 5px; }
      .on { background: #316ac5; color: #111; }
      .bar { flex: none; width: 16px; background: #f1f1f1; display: flex; flex-direction: column; }
      .bar .up, .bar .dn { height: 16px; display: flex; justify-content: center; align-items: center; }
      .tr { flex: 1; display: flex; flex-direction: column; justify-content: flex-end; }
      .th { height: 103px; background: #c6c6c6; }
      ${connCss}
    `;
  }

  markup() {
    let rows = '';
    for (let n = 142; n <= 175; n++) {
      const last = n === 175;
      rows += `<div class="row"><div class="conn ${last ? 'last' : ''}"></div><div class="lb ${last ? 'on' : ''}">${svgIcon('gear', 13)}ZDYX-${n}</div></div>`;
    }
    return `
      <div class="search">
        <div class="input">搜索构件...</div>
        <div class="go">${svgIcon('search')}</div>
      </div>
      <div class="list">
        <div class="rows">${rows}</div>
        <div class="bar">
          <div class="up"><svg width="9" height="6" viewBox="0 0 9 6"><path d="M.5 5l4-4 4 4" fill="none" stroke="#555" stroke-width="1.400"/></svg></div>
          <div class="tr"><div class="th"></div></div>
          <div class="dn"><svg width="9" height="6" viewBox="0 0 9 6"><path d="M.5 1l4 4 4-4" fill="none" stroke="#555" stroke-width="1.400"/></svg></div>
        </div>
      </div>
    `;
  }
}

class PropsPanel extends UiElement {
  styles() {
    return `
      :host { display: flex; flex-direction: column; flex: 1; padding-top: 1px; width: 994px; padding-bottom: 3px; }
      .tabs { display: flex; height: 20px; padding-left: 2px; }
      .tab { width: 60px; height: 20px; background: #fff; border: 1px solid #ddd; border-bottom: 0; text-align: center; line-height: 19px; }
      .box { flex: 1; background: #fff; border: 1px solid #aaa; padding: 4px 0 0 1px; }
      table { border-collapse: collapse; table-layout: fixed; width: 440px; }
      td { height: 19px; padding: 0; border: 1px solid #c8c8c8; overflow: hidden; white-space: nowrap; line-height: 16px; }
      tr.h td { height: 23px; text-align: center; background: #f4f4f4; }
      tr.h td.v { background: linear-gradient(#f9e3b4, #f0bd68); }
      td.n { text-align: center; background: #f3f3f3; font: 10.500px/16px "DejaVu Sans Mono", monospace; }
      td.k { padding-left: 19px; vertical-align: bottom; }
      td.val { padding-left: 2px; vertical-align: bottom; }
      tr.sel td.k { background: #0078d7; color: #fff; }
      tr.sel td.n { background: #fbd79a; color: #b0402a; }
      .blue { color: #0000e0; } .grey { color: #8a8a8a; }
      .pm { display: inline-flex; vertical-align: middle; align-items: center; justify-content: center; width: 11px; height: 11px; border: 1px solid #777; font: 10px/10px "DejaVu Sans Mono", monospace; margin: 0 6px 0 3px; }
      td.g { padding-left: 0; }
    `;
  }

  markup() {
    const row = (n, k, v, cls = '') => `<tr class="${n === 1 ? 'sel' : ''}"><td class="n">${n}</td><td class="k ${cls}">${monoHtml(k)}</td><td class="val ${cls === 'grey' ? 'grey' : ''}">${monoHtml(v)}</td></tr>`;
    const group = (n, k) => `<tr><td class="n">${n}</td><td class="g"><span class="pm">+</span>${k}</td><td></td></tr>`;
    return `
      <div class="tabs"><div class="tab">属性编辑</div></div>
      <div class="box">
        <table>
          <colgroup><col style="width:22px"><col style="width:190px"><col></colgroup>
          <tr class="h"><td></td><td>属性名称</td><td class="v"></td></tr>
          ${row(1, '名称', 'ZDYX-175')}
          ${row(2, '构件类型', '自定义线')}
          ${row(3, '截面形状', '异形', 'blue')}
          ${row(4, '截面宽度(mm)', '200', 'grey')}
          ${row(5, '截面高度(mm)', '800', 'grey')}
          ${row(6, '轴线距左边线距离(mm)', '(100)')}
          ${row(7, '截面编辑', '是', 'blue')}
          ${row(8, '备注', '')}
          ${group(9, '其它属性')}
          ${group(18, '锚固搭接')}
          ${group(33, '显示样式')}
        </table>
      </div>
    `;
  }
}

class StatusBar extends UiElement {
  styles() {
    return `
      :host { display: flex; height: 20px; gap: 2px; }
      div { border: 1px solid #e0e0e0; background: #f9f9f9; line-height: 18px; padding-left: 1px; white-space: nowrap; flex: none; }
    `;
  }

  markup() {
    return `
      <div style="width:148px"></div>
      <div style="width:78px">${monoHtml('层高:4.5m')}</div>
      <div style="width:98px">${monoHtml('底标高:-0.05m')}</div>
      <div style="width:48px;padding-left:3px">${monoHtml('0')}</div>
      <div style="width:914px">名称在当前层当前构件类型下不允许重名</div>
      <div style="width:70px;padding-left:2px">${monoHtml('158.3 FPS')}</div>
    `;
  }
}

class TaskCell extends UiElement {
  styles() {
    const active = this.hasAttribute('active'), line = this.getAttribute('line');
    return `
      :host { display: flex; flex: none; align-items: center; justify-content: center; height: 40px; width: ${this.getAttribute('w') || 48}px;
        margin-left: ${this.getAttribute('ml') || 0}px; color: #e6e6e6; position: relative; ${active ? 'background:#3b4246;' : ''} text-align: center; }
      .u { position: absolute; left: ${line || 0}px; right: ${line || 0}px; bottom: 0; height: 3px; background: #76b9ed; }
    `;
  }

  markup() {
    return `<slot></slot>${this.hasAttribute('line') ? '<div class="u"></div>' : ''}`;
  }
}

class TaskBar extends UiElement {
  styles() {
    return `
      :host { display: flex; height: 40px; background: #050d14; color: #ddd; white-space: nowrap; }
      .start { width: 48px; padding-left: 10px; display: flex; align-items: center; background: #000; flex: none; }
      .search { width: 344px; background: #333; display: flex; align-items: center; padding-left: 10px; color: #8f8f8f; font-size: 14px; flex: none; }
      .search .ring { width: 20px; height: 20px; border-radius: 50%; border: 3px solid #e4e4e4; margin-right: 6px; }
      .search .t { flex: 1; }
      .mic { margin-right: 14px; }
      .sep { width: 3px; height: 20px; border-left: 1px solid #555; border-right: 1px solid #555; }
      .cpu { line-height: 16px; font-size: 12px; display: block; }
      .time { line-height: 19px; font-size: 12.500px; color: #e8e8e8; padding-top: 1px; }
    `;
  }

  markup() {
    const white = '#f2f2f2';
    const ie = `<svg width="26" height="26" viewBox="0 0 26 26"><path d="M6 13.500h14c0-5-3-8-7-8s-7 3.500-7 8 3 7.500 7 7.500c3 0 5-1.500 6-3.500" fill="none" stroke="COLOR" stroke-width="3.500"/><path d="M4 22C2 18 12 5 23 3c2 2-1 7-3 10" fill="none" stroke="RING" stroke-width="1.500"/></svg>`;
    return `
      <div class="start"><svg width="16" height="16" viewBox="0 0 16 16"><path d="M0 2.300l6.700-1v6.300H0zM7.500 1.200L16 0v7.600H7.500zM0 8.400h6.700v6.300l-6.700-1zM7.500 8.400H16V16l-8.500-1.200z" fill="#fff"/></svg></div>
      <div class="search">
        <div class="ring"></div>
        <span class="t">在这里输入你要搜索的内容</span>
        <svg class="mic" width="12" height="18" viewBox="0 0 12 18"><rect x="3.500" y=".5" width="5" height="11" rx="2.500" fill="none" stroke="#aaa"/><path d="M1 8c0 6 10 6 10 0M6 13v4M3 17h6" fill="none" stroke="#aaa"/></svg>
      </div>
      <task-cell><svg width="20" height="16" viewBox="0 0 20 16"><rect x="4.500" y=".5" width="11" height="15" fill="none" stroke="${white}" stroke-width="1.500"/><path d="M2 3H.5v10H2M18 3h1.500v10H18" fill="none" stroke="${white}"/></svg></task-cell>
      <task-cell ml="3"><svg width="22" height="26" viewBox="0 0 22 26"><g fill="#e8e8e8"><path d="M11 13C6 12 2 9 3 4c1-3 7-3 8 1 .5 3 0 5 0 8z"/><path d="M11 13c1-5 4-9 8-8 3 1 3 7-1 8-3 .5-5 0-7 0z"/><path d="M11 13c5 1 9 4 8 9-1 3-7 3-8-1-.5-3 0-5 0-8z"/><path d="M11 13c-1 5-4 9-8 8-3-1-3-7 1-8 3-.5 5 0 7 0z"/></g></svg></task-cell>
      <task-cell ml="3">${ie.replace('COLOR', white).replace('RING', white)}</task-cell>
      <task-cell ml="2"><svg width="30" height="28" viewBox="0 0 30 28"><circle cx="12" cy="15" r="9" fill="none" stroke="#ccc" stroke-width="1.400"/><path d="M17 15a5 5 0 1 1-5-5c2 0 3 1 3.500 2" fill="none" stroke="#ccc" stroke-width="1.600"/><path d="M22 3c-2.500 0-3 2-3 4 0 2-1 3-2 4h10c-1-1-2-2-2-4 0-2-.5-4-3-4z" fill="#f0a818"/><circle cx="22" cy="12.500" r="1.500" fill="#f0a818"/></svg></task-cell>
      <task-cell w="25"><div class="sep"></div></task-cell>
      <task-cell><svg width="26" height="26" viewBox="0 0 26 26"><path d="M6 14h15c0-6-3-10-8-10S4 8 4 14c0 6 4 9 9 9 3 0 6-1 8-3v-4c-2 2-5 3-7 3-3 0-6-1-6-5" fill="none" stroke="#1179d4" stroke-width="3.600"/></svg></task-cell>
      <task-cell ml="1">${ie.replace('COLOR', '#32a0ea').replace('RING', '#f0c020')}</task-cell>
      <task-cell ml="1"><svg width="24" height="22" viewBox="0 0 24 22"><path d="M1 4h8l2 2h12v15H1z" fill="#f0cf78"/><path d="M1 8h22v13H1z" fill="#f9dd8e"/><path d="M7 14h10v7H7z" fill="#2fa4e6"/><path d="M10 17h4v4h-4z" fill="#f9dd8e"/></svg></task-cell>
      <task-cell ml="1" line="4"><svg width="26" height="28" viewBox="0 0 26 28"><path d="M20 2C10 1 3 8 3 15c0 7 6 11 11 10 6-1 9-6 8-11l-10 1 2 4c2 0 3-1 3-1-1 2-4 3-6 1-3-2-2-7 0-10 2-3 6-4 9-7z" fill="#1b9af0"/></svg></task-cell>
      <task-cell ml="2" line="3"><svg width="26" height="28" viewBox="0 0 26 28"><circle cx="13" cy="15" r="10.500" fill="#8bd13a" stroke="#d8f0b8" stroke-width="1.500"/><path d="M7 15h12M7 11h12l-3-3h-6zM7 19h12l-3 3h-6z" fill="#fff" stroke="#fff"/><path d="M15 4c2-3 4-3 6-2" fill="none" stroke="#7cbc3a" stroke-width="1.500"/></svg></task-cell>
      <task-cell active line="0"><svg width="24" height="24" viewBox="0 0 16 16">${ICONS.app}</svg></task-cell>
      <task-cell w="34"><div class="sep" style="margin-left:20px"></div></task-cell>
      <task-cell w="34">链接</task-cell>
      <task-cell w="76"><span class="cpu">29%<br>CPU使用</span></task-cell>
      <task-cell w="24"><svg width="13" height="8" viewBox="0 0 13 8"><path d="M1 7l5.500-5.500L12 7" fill="none" stroke="#eee" stroke-width="1.300"/></svg></task-cell>
      <task-cell w="24"><svg width="18" height="16" viewBox="0 0 18 16"><rect x=".5" y="1.500" width="13" height="10" fill="none" stroke="#eee"/><rect x="2" y="3" width="5" height="7" fill="#eee"/><circle cx="13" cy="11" r="4" fill="#13a34a"/><path d="M13 8.500v5" stroke="#fff"/></svg></task-cell>
      <task-cell w="26"><svg width="18" height="16" viewBox="0 0 18 16"><path d="M1 15C1 8 8 1 16 1M5 15c0-4 4-8 8-8M9 15c0-2 1.500-4 3-4" fill="none" stroke="#ddd" stroke-dasharray="1.500 1"/><circle cx="13" cy="14" r="1.300" fill="#ddd"/></svg></task-cell>
      <task-cell w="18"><svg width="16" height="16" viewBox="0 0 16 16"><path d="M1 6h3l4-4v12l-4-4H1zM11 5c1.500 2 1.500 4 0 6M13.500 3c2.500 3 2.500 7 0 10" fill="none" stroke="#eee"/></svg></task-cell>
      <task-cell w="38"><svg width="23" height="16" viewBox="0 0 23 16"><rect x=".5" y=".5" width="22" height="15" fill="none" stroke="#eee"/><path d="M3 4h17M3 7h17M3 10h17" stroke="#eee" stroke-dasharray="1 1"/><path d="M6 13h11" stroke="#eee"/></svg></task-cell>
      <task-cell w="18"><span style="font-size:14px;font-weight:700;color:#fff">中</span></task-cell>
      <task-cell w="40"><svg width="16" height="18" viewBox="0 0 16 18"><rect x="1" y="1" width="14" height="16" rx="3" fill="#ee4a16" transform="rotate(-6 8 9)"/><path d="M12 5H6c-2 0-2 3.500 0 3.500h4c2 0 2 4-.5 4H4" fill="none" stroke="#fff" stroke-width="2.200"/></svg></task-cell>
      <task-cell w="63"><span class="time">15:44<br>2018/4/6</span></task-cell>
      <task-cell w="55"><svg width="24" height="26" viewBox="0 0 24 26"><path d="M2 2h15v14H2z" fill="#f2f2f2"/><path d="M4 5h11M4 8h11M4 11h8" stroke="#222"/><circle cx="15" cy="17" r="7" fill="#2d2d2d" stroke="#888"/><text x="15" y="21" text-anchor="middle" font-family="Liberation Sans" font-weight="700" font-size="11" fill="#fff">1</text></svg></task-cell>
    `;
  }
}

class SectionWindow extends UiElement {
  styles() {
    return `
      :host { position: absolute; left: 622px; top: 132px; width: 721px; height: 570px; display: flex; flex-direction: column;
        background: #dde7f2; border: 1px solid #555; border-bottom: 2px solid #444; padding: 0 7px 6px 6px; }
      .title { height: 30px; margin: 0 -7px 0 -6px; padding: 11px 0 0 8px; color: #9a9a9a; line-height: 16px;
        background: linear-gradient(#b7c7d8, #dbe7f3); flex: none; }
      .sheet { flex: 1; display: flex; flex-direction: column; background: #f0f0f0; padding: 0 1px; min-height: 0; }
      .tabs { display: flex; height: 21px; padding: 0 0 0 1px; align-items: flex-end; flex: none; }
      .tab { height: 19px; width: 38px; background: #f0f0f0; border: 1px solid #d4d4d4; border-bottom: 0; padding-left: 4px; line-height: 20px; }
      .tab.on { height: 22px; width: 46px; background: #fff; margin-bottom: -1px; z-index: 1; line-height: 20px; border-bottom: 0; padding-left: 7px; }
      .page { flex: 0 0 485px; border: 1px solid #d4d4d4; background: #f0f0f0; padding: 3px 1px 0 3px; display: flex; flex-direction: column; }
      .tb { height: 25px; display: flex; align-items: center; background: linear-gradient(#fbfbfb, #f0f0f0); flex: none; }
      .opt { height: 24px; margin-top: 3px; display: flex; align-items: center; background: #f6f6f6; flex: none; }
      .grip { width: 11px; padding-left: 5px; flex: none; height: 18px; }
      .grip i { display: block; height: 100%; width: 2px; background: repeating-linear-gradient(to bottom, #9a9a9a 0 2px, transparent 2px 4px); }
      .radio { width: 11px; height: 11px; border-radius: 50%; border: 1px solid #999; background: #f4f4f4; flex: none; display: flex; align-items: center; justify-content: center; }
      .radio.on::after { content: ""; width: 5px; height: 5px; border-radius: 50%; background: #111; }
      .num { width: 76px; height: 23px; border: 1px solid #8a8a8a; background: #f4f4f4; display: flex; align-items: center; flex: none; color: #666; justify-content: flex-end; font: 11.500px/16px "Noto Sans CJK SC", sans-serif; }
      .spin { width: 14px; height: 100%; display: flex; flex-direction: column; justify-content: center; align-items: center; gap: 4px; margin-left: 5px; }
      .spin i { border: 3px solid transparent; }
      .spin i:first-child { border-bottom: 4px solid #666; border-top: 0; }
      .spin i:last-child { border-top: 4px solid #666; border-bottom: 0; }
      section-canvas { height: 397px; margin-top: 3px; flex: none; width: 698px; }
      .dyn { margin: 2px 0 0 1px; width: 57px; height: 23px; border: 1px solid #2a8ae0; background: #e9f1f9; text-align: center; line-height: 21px; flex: none; }
      .foot { display: flex; margin-top: 6px; height: 22px; gap: 2px; flex: none; }
      .foot div { border: 1px solid #ddd; background: #f6f6f6; line-height: 20px; padding-left: 3px; white-space: nowrap; }
      .grip2 { width: 9px; height: 9px; align-self: flex-end; margin-left: auto; margin-bottom: 2px; margin-right: 2px; background: radial-gradient(#aaa 1px, transparent 1.200px) 0 0 / 3px 3px; }
    `;
  }

  markup() {
    return `
      <div class="title">截面编辑</div>
      <div class="sheet">
        <div class="tabs"><div class="tab on">截面</div><div class="tab">配筋</div></div>
        <div class="page">
          <div class="tb">
            <div class="grip"><i></i></div>
            <tool-cell w="75" g="4" icon="gridtool">定义网格</tool-cell>
            <tool-sep w="5" p="1"></tool-sep>
            <tool-cell w="62" p="2" g="3" icon="line" dim>画直线</tool-cell>
            <tool-cell w="49" p="2" g="4" icon="arc" dim>画弧</tool-cell>
            <tool-cell w="50" p="4" g="4" icon="circle" dim>画圆</tool-cell>
            <tool-sep w="9" p="6"></tool-sep>
            <tool-cell w="88" g="6" icon="xbig">清除多边形</tool-cell>
            <tool-sep w="6" p="2"></tool-sep>
            <tool-cell w="50" g="5" icon="undo">回退</tool-cell>
            <tool-sep w="7" p="3"></tool-sep>
            <tool-cell w="50" p="1" g="4" icon="imp">导入</tool-cell>
            <tool-cell w="52" p="1" g="4" icon="exp">导出</tool-cell>
            <tool-sep w="6" p="2"></tool-sep>
            <tool-cell w="100" g="6" icon="lens">查询多边形库</tool-cell>
          </div>
          <div class="opt">
            <div class="grip" style="width:10px"><i></i></div>
            <div class="radio on"></div><tool-cell w="54" p="7">不偏移</tool-cell>
            <div class="radio"></div><tool-cell w="40" p="9">正交</tool-cell>
            <div class="radio"></div><tool-cell w="59" p="9">极坐标</tool-cell>
            <tool-sep w="3" p="0"></tool-sep>
            <tool-cell w="27">X =</tool-cell>
            <div class="num">0<div class="spin"><i></i><i></i></div></div>
            <tool-cell w="43" p="7">mm</tool-cell>
            <tool-cell w="25">Y =</tool-cell>
            <div class="num" style="width:78px">0<div class="spin"><i></i><i></i></div></div>
            <tool-cell w="30" p="6">mm</tool-cell>
          </div>
          <section-canvas></section-canvas>
          <div class="dyn">动态输入</div>
        </div>
        <div class="foot">
          <div style="width:98px;font-size:11px">(X: -494 Y: 469)</div>
          <div style="flex:1;display:flex">请选择下一点<span class="grip2"></span></div>
        </div>
      </div>
    `;
  }
}

class SectionCanvas extends UiElement {
  styles() {
    return `
      :host { display: block; background: #000; overflow: hidden; }
      svg { display: block; }
      .big { font: 14px "DejaVu Sans Mono", monospace; fill: #0f0; }
      .small { font: 10.500px "DejaVu Sans Mono", monospace; fill: #aaa; }
    `;
  }

  markup() {
    const tick = (x, y, c) => `<path d="M${x - 5} ${y + 5}L${x + 5} ${y - 5}" stroke="${c}"/>`;
    const ys = [283.5, 560.5, 600.5], xs = [944.5, 983.5, 1023.5];
    let lines = '';
    ys.forEach(y => {
      lines += `<path d="M885 ${y}H920" stroke="#008000"/><path d="M920 ${y}H936" stroke="#fff"/><path d="M936 ${y}H944" stroke="#008000"/>`;
      lines += tick(892.5, y, '#008000') + tick(928.5, y, '#fff');
    });
    xs.forEach(x => {
      lines += `<path d="M${x} 600V640" stroke="#008000"/><path d="M${x} 609V624" stroke="#fff"/>` + tick(x, 616.5, '#fff');
    });
    return `
      <svg width="698" height="397" viewBox="634 243 698 397">
        <path d="M983.5 283.500H1023.500V600.500M944.500 560.500H1023.500M983.500 560.500V600.500" fill="none" stroke="#bbb"/>
        <path d="M892.500 283.500V600.500" stroke="#008000"/>
        <path d="M928.500 283.500V600.500" stroke="#fff"/>
        ${lines}
        <path d="M944.500 616.500H1023.500M944.500 267.500H983.500M944.500 259V276M983.500 259V276" stroke="#fff" fill="none"/>
        ${tick(944.5, 267.5, '#fff')}${tick(983.5, 267.5, '#fff')}
        <path d="M944.500 283.500H983.500V560.500L1023.500 600.500H944.500Z" fill="none" stroke="#f00" stroke-width="3"/>
        <text class="small" x="896" y="426">700</text>
        <text class="big" x="903" y="427">700</text>
        <text class="small" x="896" y="585">100</text>
        <text class="big" x="903" y="586">100</text>
        <text class="big" x="952.500" y="260">100</text>
        <text class="small" x="955" y="639">100</text>
        <text class="small" x="994" y="639">100</text>
        <text class="big" x="952.500" y="634">100</text>
        <text class="big" x="992" y="634">100</text>
      </svg>
    `;
  }
}

class MonoText extends UiElement {
  styles() { return ':host { display: inline; white-space: nowrap; }'; }
  markup() { return monoHtml(this.getAttribute('t')); }
}

class GridDialog extends UiElement {
  styles() {
    return `
      :host { position: absolute; left: 412px; top: 278px; width: 411px; height: 222px; background: #efefef; border: 1px solid #3d94e6;
        box-shadow: 0 2px 8px rgba(0,0,0,.3); display: flex; flex-direction: column; }
      .title { height: 25px; background: #fff; display: flex; align-items: center; padding: 0 11px 0 3px; flex: none; }
      .title span { flex: 1; }
      .body { flex: 1; padding: 21px 14px 0 13px; display: flex; flex-direction: column; gap: 15px; }
      .group { height: 58px; border: 1px solid #d8d8d8; position: relative; padding: 9px 8px 0 7px; }
      .cap { position: absolute; left: 7px; top: -9px; background: #efefef; padding: 0 1px; }
      .area { height: 41px; background: #fff; border: 1px solid #7e7e7e; padding: 0 2px; font: 10px/16px "DejaVu Sans Mono", monospace; }
      .hl { background: #0a72cf; color: #fff; display: inline-block; height: 15px; line-height: 15px; }
      .btns { display: flex; justify-content: flex-end; gap: 15px; margin-top: -3px; }
      .btns ui-button { width: 72px; height: 23px; background: #e1e1e1; border-color: #adadad; box-shadow: none; }
    `;
  }

  markup() {
    const label = '间距(mm)=>间距*个数,间距,间距*个数,间距,...';
    return `
      <div class="title"><span>定义网格</span>${svgIcon('close', 14)}</div>
      <div class="body">
        <div class="group">
          <div class="cap"><m-text t="水平方向${label}"></m-text></div>
          <div class="area"><span class="hl">100,100</span></div>
        </div>
        <div class="group">
          <div class="cap"><m-text t="垂直方向${label}"></m-text></div>
          <div class="area">100,700</div>
        </div>
        <div class="btns"><ui-button>确定</ui-button><ui-button>取消</ui-button></div>
      </div>
    `;
  }
}

// the red circles someone drew by hand on the screenshot
class HandMarks extends UiElement {
  styles() {
    return ':host { position: absolute; left: 0; top: 0; width: 1366px; height: 768px; pointer-events: none; } svg { display: block; }';
  }

  markup() {
    return `
      <svg width="1366" height="768" viewBox="0 0 1366 768" fill="none" stroke="#f00" stroke-width="3" stroke-linecap="round">
        <path d="M617 197C622 189 650 184 680 185C712 186 738 190 740 198C741 206 716 211 684 211C652 211 616 207 617 197Z"/>
        <path d="M380 282C381 266 412 256 440 256C470 257 494 268 497 282C499 298 478 310 448 311C416 311 379 302 380 282Z"/>
      </svg>
    `;
  }
}

customElements.define('ui-button', UiButton);
customElements.define('tool-cell', ToolCell);
customElements.define('tool-sep', ToolSep);
customElements.define('tool-caret', ToolCaret);
customElements.define('combo-box', ComboBox);
customElements.define('m-text', MonoText);
customElements.define('ime-bar', ImeBar);
customElements.define('tool-bar', ToolBar);
customElements.define('title-bar', TitleBar);
customElements.define('tree-view', TreeView);
customElements.define('nav-panel', NavPanel);
customElements.define('parts-panel', PartsPanel);
customElements.define('props-panel', PropsPanel);
customElements.define('status-bar', StatusBar);
customElements.define('task-cell', TaskCell);
customElements.define('task-bar', TaskBar);
customElements.define('section-canvas', SectionCanvas);
customElements.define('section-window', SectionWindow);
customElements.define('grid-dialog', GridDialog);
customElements.define('hand-marks', HandMarks);
customElements.define('gld-app', GldApp);
</script>
</body>
</html>
